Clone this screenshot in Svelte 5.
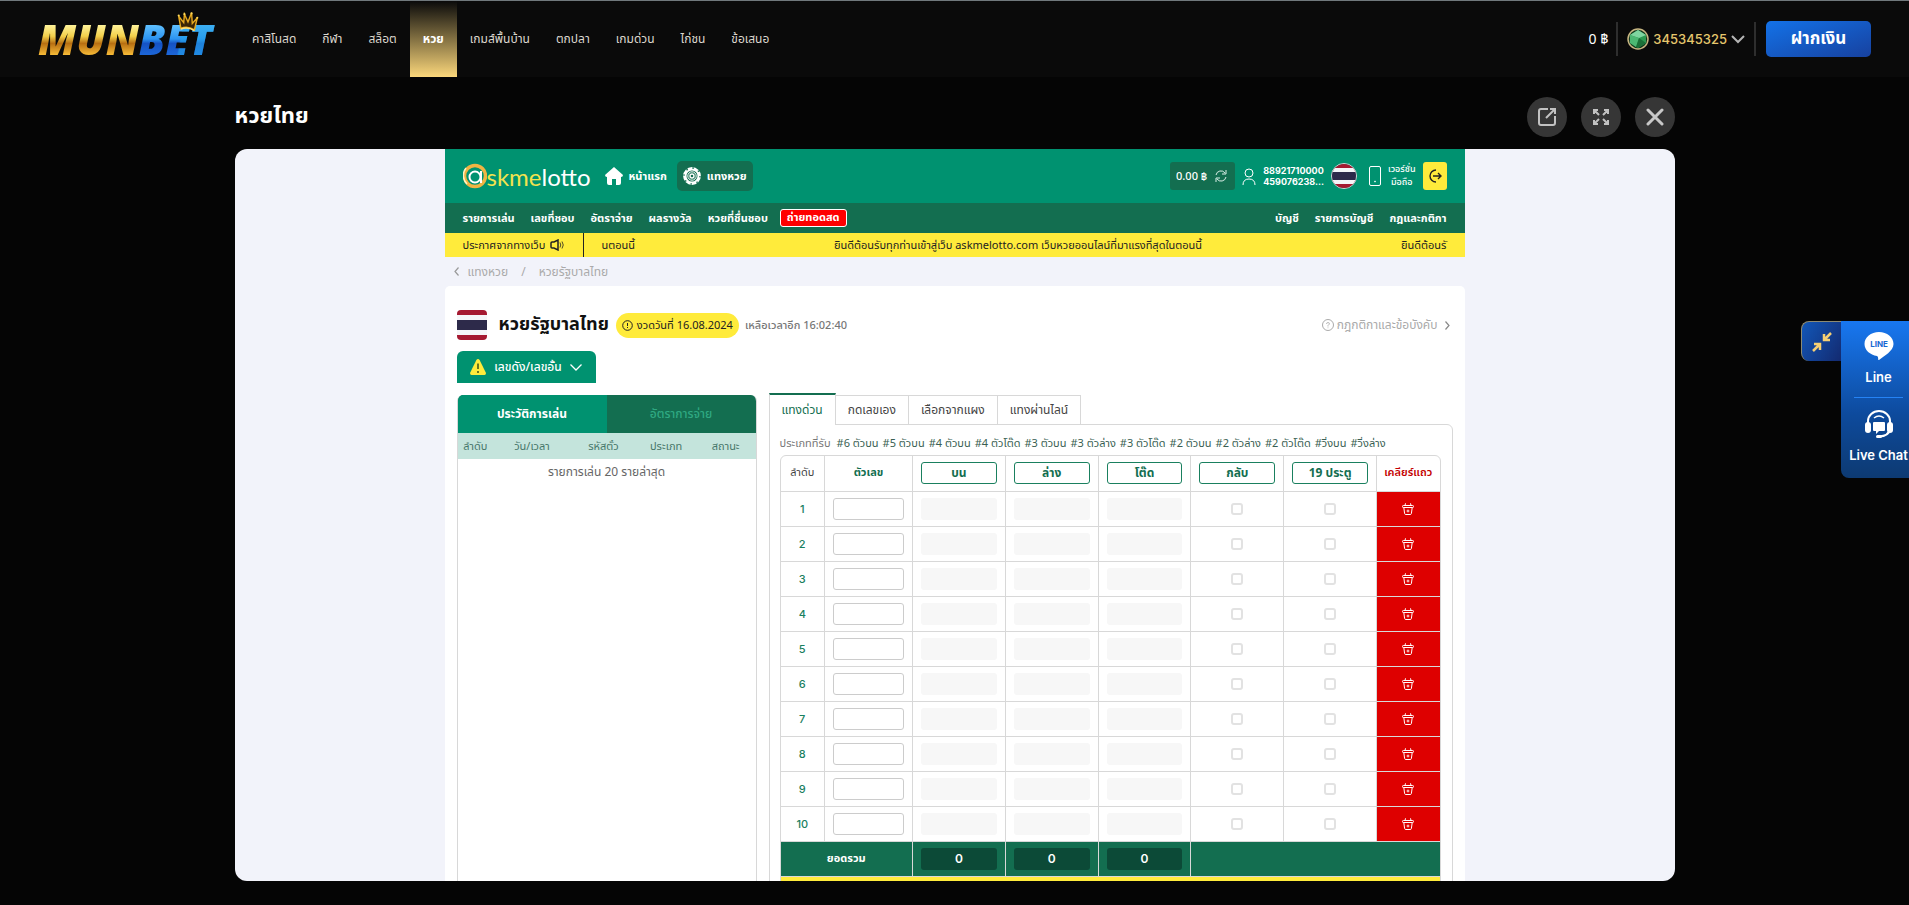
<script>
  let activeNav = $state('หวย');
  let activeTab = $state('แทงด่วน');
  let activeHistory = $state('ประวัติการเล่น');

  const navItems = ['คาสิโนสด', 'กีฬา', 'สล็อต', 'หวย', 'เกมส์พื้นบ้าน', 'ตกปลา', 'เกมด่วน', 'ไก่ชน', 'ข้อเสนอ'];
  const subLeft = ['รายการเล่น', 'เลขที่ชอบ', 'อัตราจ่าย', 'ผลรางวัล', 'หวยที่ชื่นชอบ'];
  const subRight = ['บัญชี', 'รายการบัญชี', 'กฎและกติกา'];
  const historyTabs = ['ประวัติการเล่น', 'อัตราการจ่าย'];
  const historyColumns = ['ลำดับ', 'วัน/เวลา', 'รหัสตั๋ว', 'ประเภท', 'สถานะ'];
  const tabs = ['แทงด่วน', 'กดเลขเอง', 'เลือกจากแผง', 'แทงผ่านไลน์'];
  const types = [
    '#6 ตัวบน', '#5 ตัวบน', '#4 ตัวบน', '#4 ตัวโต๊ด', '#3 ตัวบน', '#3 ตัวล่าง',
    '#3 ตัวโต๊ด', '#2 ตัวบน', '#2 ตัวล่าง', '#2 ตัวโต๊ด', '#วิ่งบน', '#วิ่งล่าง'
  ];
  const betColumns = ['บน', 'ล่าง', 'โต๊ด'];
  const flagColumns = ['กลับ', '19 ประตู'];
  let rows = $state(Array.from({ length: 10 }, () => ({ number: '', checks: [false, false] })));

  function clearRow(row) {
    row.number = '';
    row.checks = [false, false];
  }
</script>

{#snippet flag()}
  <svg viewBox="0 0 30 30" preserveAspectRatio="none" aria-hidden="true">
    <rect width="30" height="30" fill="#a51931" />
    <rect y="5" width="30" height="20" fill="#f4f5f8" />
    <rect y="10" width="30" height="10" fill="#2d2a4a" />
  </svg>
{/snippet}

<header class="site-header">
  <a class="logo" href="/" aria-label="MUNBET">
    <span class="gold">MUN</span><span class="blue">BET</span>
    <svg class="crown" viewBox="0 0 30 28" aria-hidden="true">
      <path d="M5 23 L2 6 L9 15 L10 3 L15 14 L20 1 L21 16 L28 8 L24 25 Q14 19 5 23Z" fill="#3a2505" stroke="#e5a91f" stroke-width="2" />
      <path d="M5 24 Q14 20 24 26" fill="none" stroke="#ffe07a" stroke-width="2" />
      <circle cx="2" cy="5" r="1.5" fill="#ffd95a" /><circle cx="10" cy="3" r="1.5" fill="#ffd95a" />
      <circle cx="20" cy="2" r="1.5" fill="#ffd95a" /><circle cx="28" cy="8" r="1.5" fill="#ffd95a" />
    </svg>
  </a>
  <nav class="main-nav">
    {#each navItems as item}
      <a href="#{item}" class:active={item === activeNav} onclick={() => (activeNav = item)}>{item}</a>
    {/each}
  </nav>
  <div class="account">
    <span class="money">0 ฿</span>
    <button class="user">
      <svg width="22" height="22" viewBox="0 0 22 22" aria-hidden="true">
        <circle cx="11" cy="11" r="10" fill="#12381f" stroke="#c7b682" stroke-width="1.5" />
        <path d="M11 2 L19 7 V15 L11 20 L3 15 V7Z" fill="#2c9a51" />
        <path d="M11 2 L19 7 L12 10 L3 7Z" fill="#7fd6a0" />
        <path d="M3 7 L12 10 L9 19 L3 15Z" fill="#4cb873" />
        <path d="M12 10 L19 15 L11 20 L9 19Z" fill="#1b7038" />
      </svg>
      <span>345345325</span>
      <svg width="14" height="9" viewBox="0 0 14 9" aria-hidden="true">
        <path d="M1 1 L7 7 L13 1" fill="none" stroke="#b5b5b5" stroke-width="2" />
      </svg>
    </button>
    <button class="deposit">ฝากเงิน</button>
  </div>
</header>

<main>
  <div class="title-bar">
    <h1>หวยไทย</h1>
    <div class="window-buttons">
      <button aria-label="เปิดหน้าต่างใหม่">
        <svg width="20" height="20" viewBox="0 0 20 20" fill="none" stroke="#c2c2c2" stroke-width="2">
          <path d="M11 2 H4 Q2 2 2 4 V16 Q2 18 4 18 H16 Q18 18 18 16 V9" />
          <path d="M9 11 L17 3 M13 2 H18 V7" />
        </svg>
      </button>
      <button aria-label="เต็มจอ">
        <svg width="18" height="18" viewBox="0 0 18 18" fill="none" stroke="#c2c2c2" stroke-width="2">
          <path d="M2 6 V2 H6 M2 2 L7 7 M12 2 H16 V6 M16 2 L11 7 M2 12 V16 H6 M2 16 L7 11 M12 16 H16 V12 M16 16 L11 11" />
        </svg>
      </button>
      <button aria-label="ปิด">
        <svg width="18" height="18" viewBox="0 0 18 18" fill="none" stroke="#c8c8c8" stroke-width="3" stroke-linecap="round">
          <path d="M2 2 L16 16 M16 2 L2 16" />
        </svg>
      </button>
    </div>
  </div>

  <section class="frame">
    <div class="lotto">
      <div class="lotto-header">
        <a class="lotto-logo" href="#home">
          <svg width="24" height="26" viewBox="0 0 24 26" fill="none" aria-hidden="true">
            <circle cx="12" cy="13" r="10.5" stroke="#f0b443" stroke-width="3.5" />
            <path d="M3 5 A12 12 0 0 0 4 21" stroke="#fff3c4" stroke-width="1.5" />
            <circle cx="12" cy="14" r="5.5" fill="#009270" stroke="#fff" stroke-width="2" />
            <path d="M18 8 V20" stroke="#fff" stroke-width="2" />
          </svg>
          <span class="skme">skme</span><span>lotto</span>
        </a>
        <a class="header-link" href="#home">
          <svg width="18" height="18" viewBox="0 0 18 18" aria-hidden="true">
            <path d="M9 0 L18 8 Q18 10 16 10 V16 Q16 18 14 18 H11 V12 H7 V18 H4 Q2 18 2 16 V10 Q0 10 0 8Z" fill="#fff" />
          </svg>
          หน้าแรก
        </a>
        <a class="header-link selected" href="#bet">
          <svg width="18" height="18" viewBox="0 0 18 18" fill="none" stroke="#fff" aria-hidden="true">
            <circle cx="9" cy="9" r="7.2" stroke-width="3.4" />
            <circle cx="9" cy="9" r="8" stroke="#136e50" stroke-width="1.4" stroke-dasharray="1.5 4.8" />
            <circle cx="9" cy="9" r="4.2" stroke-width="1" />
            <circle cx="9" cy="9" r="2" stroke-width="1.4" />
          </svg>
          แทงหวย
        </a>
        <div class="header-right">
          <button class="balance">
            0.00 ฿
            <svg width="12" height="12" viewBox="0 0 12 12" fill="none" stroke="#dcefe8" aria-hidden="true">
              <path d="M1 5 A5 5 0 0 1 10 3 M11 0 V4 H7 M11 7 A5 5 0 0 1 2 9 M1 12 V8 H5" />
            </svg>
          </button>
          <svg width="14" height="17" viewBox="0 0 14 17" fill="none" stroke="#fff" aria-hidden="true">
            <circle cx="7" cy="5" r="4" />
            <path d="M1 17 Q1 11 7 11 Q13 11 13 17" />
          </svg>
          <span class="user-code">88921710000<br />459076238...</span>
          <span class="round-flag">{@render flag()}</span>
          <svg class="phone" width="12" height="20" viewBox="0 0 12 20" fill="none" stroke="#fff" aria-hidden="true">
            <rect x="0.5" y="0.5" width="11" height="19" rx="1.5" />
            <circle cx="6" cy="15.5" r="0.5" />
          </svg>
          <a class="mobile" href="#mobile">เวอร์ชั่น<br />มือถือ</a>
          <button class="logout" aria-label="ออกจากระบบ">
            <svg width="14" height="14" viewBox="0 0 14 14" fill="none" stroke="#222" stroke-width="1.4">
              <path d="M8 1 A6 6 0 1 0 8 13 M5 7 H13 M10 4 L13 7 L10 10" />
            </svg>
          </button>
        </div>
      </div>

      <nav class="sub-nav">
        {#each subLeft as item}<a href="#{item}">{item}</a>{/each}
        <a class="live" href="#live">ถ่ายทอดสด</a>
        <div class="sub-right">
          {#each subRight as item}<a href="#{item}">{item}</a>{/each}
        </div>
      </nav>

      <div class="notice">
        <div class="notice-label">
          ประกาศจากทางเว็บ
          <svg width="14" height="12" viewBox="0 0 14 12" fill="none" stroke="#222" aria-hidden="true">
            <path d="M1 4 Q1 3 2 3 H4 L8 1 V11 L4 9 H2 Q1 9 1 8Z" stroke-width="1.5" />
            <path d="M10 3.5 Q11.500 6 10 8.500 M12 2.500 Q14.500 6 12 9.500" stroke-width="0.8" />
          </svg>
        </div>
        <div class="ticker">
          <span>นตอนนี้</span>
          <span>ยินดีต้อนรับทุกท่านเข้าสู่เว็บ askmelotto.com เว็บหวยออนไลน์ที่มาแรงที่สุดในตอนนี้</span>
          <span>ยินดีต้อนรั</span>
        </div>
      </div>

      <nav class="crumbs">
        <svg width="5" height="9" viewBox="0 0 5 9" aria-hidden="true"><path d="M4.5 0.5 L1 4.5 L4.5 8.5" fill="none" stroke="#999" stroke-width="1.2" /></svg>
        <a href="#bet">แทงหวย</a><span>/</span><a href="#thai">หวยรัฐบาลไทย</a>
      </nav>

      <div class="card">
        <div class="draw">
          <span class="square-flag">{@render flag()}</span>
          <h2>หวยรัฐบาลไทย</h2>
          <span class="date">
            <svg width="11" height="11" viewBox="0 0 11 11" fill="none" stroke="#222" aria-hidden="true">
              <circle cx="5.5" cy="5.5" r="4.8" /><path d="M5.5 3 V6 M5.5 7 V8" />
            </svg>
            งวดวันที่ 16.08.2024
          </span>
          <span class="remaining">เหลือเวลาอีก 16:02:40</span>
          <a class="rules" href="#rules">
            <svg width="12" height="12" viewBox="0 0 12 12" fill="none" stroke="#aaa" aria-hidden="true">
              <circle cx="6" cy="6" r="5.5" /><path d="M4.5 5 Q4.5 3.5 6 3.5 Q7.5 3.5 7.5 5 L6 6.5 V7.5 M6 8.5 V9.2" stroke-width="0.8" />
            </svg>
            กฎกติกาและข้อบังคับ
            <svg class="more" width="5" height="9" viewBox="0 0 5 9" aria-hidden="true"><path d="M0.5 0.5 L4 4.5 L0.5 8.5" fill="none" stroke="#888" stroke-width="1.2" /></svg>
          </a>
        </div>

        <button class="hot-numbers">
          <svg width="16" height="16" viewBox="0 0 16 16" aria-hidden="true">
            <path d="M8 0 Q9 0 9.600 1 L16 14 Q16 16 14.500 16 H1.500 Q0 16 0 14 L6.400 1 Q7 0 8 0Z" fill="#ffeb3b" />
            <path d="M8 4.500 V10 M8 12 V14" stroke="#5b6a1c" stroke-width="1.800" />
          </svg>
          เลขดัง/เลขอั้น
          <svg width="12" height="7" viewBox="0 0 12 7" aria-hidden="true"><path d="M0.500 0.500 L6 6 L11.500 0.500" fill="none" stroke="#fff" stroke-width="1.300" /></svg>
        </button>

        <div class="columns">
          <section class="history">
            <div class="history-tabs">
              {#each historyTabs as tab}
                <button class:active={tab === activeHistory} onclick={() => (activeHistory = tab)}>{tab}</button>
              {/each}
            </div>
            <table>
              <thead>
                <tr>{#each historyColumns as column}<th>{column}</th>{/each}</tr>
              </thead>
              <tbody>
                <tr><td colspan="5">รายการเล่น 20 รายล่าสุด</td></tr>
              </tbody>
            </table>
          </section>

          <section class="betting">
            <div class="bet-tabs">
              {#each tabs as tab}
                <button class:active={tab === activeTab} onclick={() => (activeTab = tab)}>{tab}</button>
              {/each}
            </div>
            <div class="bet-panel">
              <div class="types">
                <span class="types-label">ประเภทที่รับ</span>
                {#each types as type}<span>{type}</span>{/each}
              </div>
              <div class="table-wrap">
                <table class="bet-table">
                  <colgroup>
                    <col class="col-no" /><col class="col-number" />
                    <col /><col /><col /><col /><col />
                    <col class="col-clear" />
                  </colgroup>
                  <thead>
                    <tr>
                      <th class="plain">ลำดับ</th>
                      <th>ตัวเลข</th>
                      {#each [...betColumns, ...flagColumns] as column}
                        <th><button class="fill">{column}</button></th>
                      {/each}
                      <th class="clear-title">เคลียร์แถว</th>
                    </tr>
                  </thead>
                  <tbody>
                    {#each rows as row, i}
                      <tr>
                        <td class="no">{i + 1}</td>
                        <td><input type="text" aria-label="ตัวเลข {i + 1}" bind:value={row.number} /></td>
                        {#each betColumns as column}
                          <td><input type="text" aria-label="{column} {i + 1}" disabled /></td>
                        {/each}
                        {#each flagColumns as column, c}
                          <td><input type="checkbox" aria-label="{column} {i + 1}" bind:checked={row.checks[c]} /></td>
                        {/each}
                        <td class="clear">
                          <button aria-label="เคลียร์แถว {i + 1}" onclick={() => clearRow(row)}>
                            <svg width="12" height="12" viewBox="0 0 12 12" fill="none" stroke="#fff">
                              <rect x="0.500" y="2.500" width="11" height="2" rx="0.800" />
                              <path d="M1.800 4.500 L2.600 10.500 Q2.800 11.500 3.800 11.500 H8.200 Q9.200 11.500 9.400 10.500 L10.200 4.500 M3.500 0.300 L3 2.500 M8.500 0.300 L9 2.500" />
                              <path d="M6 6.600 V9.400 M4.600 8 H7.400" stroke-width="0.900" />
                            </svg>
                          </button>
                        </td>
                      </tr>
                    {/each}
                  </tbody>
                  <tfoot>
                    <tr>
                      <td colspan="2">ยอดรวม</td>
                      {#each betColumns as _}<td><output>0</output></td>{/each}
                      <td colspan="3"></td>
                    </tr>
                    <tr class="grand"><td colspan="8"></td></tr>
                  </tfoot>
                </table>
              </div>
            </div>
          </section>
        </div>
      </div>
    </div>
  </section>
</main>

<aside class="contact">
  <button class="collapse" aria-label="ย่อ">
    <svg width="20" height="20" viewBox="0 0 20 20" fill="none" stroke="#f6cf73" stroke-width="2.500">
      <path d="M19 1 L12 8 M12 2 V8 H18 M1 19 L8 12 M2 12 H8 V18" />
    </svg>
  </button>
  <div class="contact-panel">
    <a href="#line">
      <svg width="30" height="30" viewBox="0 0 30 30" aria-hidden="true">
        <path d="M15 1 C23 1 29.500 6 29.500 13 C29.500 20 20 25 15 29 C13.500 29.500 15 26 13 25 C6 24 0.500 19 0.500 13 C0.500 6 7 1 15 1Z" fill="#fff" />
        <text x="15" y="16" text-anchor="middle" font-size="8" font-weight="700" fill="#1769d2">LINE</text>
      </svg>
      Line
    </a>
    <hr />
    <a href="#chat">
      <svg width="30" height="30" viewBox="0 0 30 30" fill="none" aria-hidden="true">
        <path d="M4 14 V12 A11 10 0 0 1 26 12 V20 Q25 27 15 27.500" stroke="#fff" stroke-width="2" />
        <rect x="1" y="13" width="6" height="11" rx="3" fill="#fff" />
        <rect x="23" y="13" width="6" height="11" rx="3" fill="#fff" />
        <rect x="12" y="26" width="6" height="3" rx="1.500" fill="#fff" />
        <path d="M10 13 H20 Q21 13 21 14 V21 Q21 22 20 22 H15 L12 25 V22 H10 Q9 22 9 21 V14 Q9 13 10 13Z" fill="#fff" />
        <path d="M10 9 Q15 5 20 9" stroke="#fff" stroke-width="1.500" />
      </svg>
      Live Chat
    </a>
  </div>
</aside>

<style>
  :global(body) {
    background: #050505;
    overflow: hidden;
    font-family: "Noto Sans Thai", "Noto Sans", "Liberation Sans", sans-serif;
  }

  a {
    color: inherit;
    text-decoration: none;
  }

  button {
    padding: 0;
    border: 0;
    background: none;
    color: inherit;
    font: inherit;
    cursor: pointer;
  }

  svg {
    flex: none;
  }

  .site-header {
    display: flex;
    align-items: center;
    height: 77px;
    box-sizing: border-box;
    padding: 0 38px;
    border-top: 1px solid #70787c;
    background: #0a0a0a;
  }

  .logo {
    position: relative;
    display: flex;
    width: 182px;
    margin-right: 19px;
    font: italic 900 42px/56px "Open Sans", sans-serif;
  }

  .gold,
  .blue {
    color: transparent;
    background-clip: text;
  }

  .gold {
    background-image: linear-gradient(#fff39a 25%, #f3d04a 45%, #b86f12 58%, #f5b936 78%);
  }

  .blue {
    padding-right: 8px;
    background-image: linear-gradient(100deg, transparent 50%, #25a3ea99 52%), linear-gradient(#5fc0ff 25%, #2b93f0 50%, #1552c4 58%, #1c66d8 78%);
  }

  .crown {
    position: absolute;
    left: 136px;
    top: 1px;
    width: 28px;
    height: 20px;
  }

  .main-nav {
    display: flex;
    height: 100%;
  }

  .main-nav a {
    display: flex;
    align-items: center;
    padding: 0 13px;
    color: #ddd8cf;
    font-size: 12px;
  }

  .main-nav a.active {
    background: linear-gradient(#0a0a0a, #fbd77b);
    color: #fff;
    font-weight: 700;
  }

  .account {
    display: flex;
    align-items: center;
    margin-left: auto;
    font-size: 14px;
    color: #fff;
  }

  .user {
    display: flex;
    align-items: center;
    gap: 4px;
    height: 34px;
    margin: 0 10px 0 8px;
    padding: 0 9px;
    border: solid #2e2e2e;
    border-width: 0 2px;
    color: #e5c76d;
    font: 500 13px Inter, sans-serif;
  }

  .deposit {
    width: 105px;
    height: 36px;
    border-radius: 5px;
    background: linear-gradient(160deg, #1372e8, #17419f);
    font-size: 17px;
    font-weight: 700;
  }

  main {
    max-width: 1440px;
    margin: 0 auto;
  }

  .title-bar {
    display: flex;
    align-items: center;
    justify-content: space-between;
    padding: 20px 0 12px;
    color: #fff;
  }

  h1 {
    margin: 0;
    font-size: 22px;
    line-height: 28px;
  }

  .window-buttons {
    display: flex;
    gap: 14px;
  }

  .window-buttons button {
    display: grid;
    place-items: center;
    width: 40px;
    height: 40px;
    border-radius: 50%;
    background: #363636;
  }

  .frame {
    height: calc(100vh - 173px);
    overflow: hidden;
    border-radius: 12px;
    background: #f2f3fa;
  }

  .lotto {
    max-width: 1020px;
    margin: 0 auto;
    font-size: 12px;
    color: #444;
  }

  .lotto-header {
    display: flex;
    align-items: center;
    height: 54px;
    padding: 0 18px;
    background: #009270;
    color: #fff;
  }

  .lotto-logo {
    display: flex;
    align-items: center;
    margin-right: 14px;
    font: 24px Lato, sans-serif;
  }

  .skme {
    color: #f2e24f;
  }

  .header-link {
    display: flex;
    align-items: center;
    gap: 6px;
    height: 30px;
    font-size: 11px;
    font-weight: 700;
  }

  .selected {
    margin-left: 10px;
    padding: 0 6px;
    border-radius: 5px;
    background: #136e50;
  }

  .header-right {
    display: flex;
    align-items: center;
    gap: 7px;
    margin-left: auto;
  }

  .balance {
    display: flex;
    align-items: center;
    gap: 8px;
    height: 28px;
    padding: 0 8px 0 6px;
    border-radius: 3px;
    background: #136e50;
    font-size: 11px;
    font-weight: 500;
  }

  .user-code {
    font: 700 9px/11px Inter, sans-serif;
  }

  .round-flag {
    width: 24px;
    height: 24px;
    overflow: hidden;
    border: 1px solid #d9d4d8;
    border-radius: 50%;
  }

  .round-flag svg,
  .square-flag svg {
    display: block;
    width: 100%;
    height: 100%;
  }

  .phone {
    margin-left: 5px;
  }

  .mobile {
    text-align: center;
    font-size: 9px;
    font-weight: 500;
    line-height: 13px;
  }

  .logout {
    display: grid;
    place-items: center;
    width: 24px;
    height: 28px;
    border-radius: 3px;
    background: #ffeb3b;
  }

  .sub-nav {
    display: flex;
    align-items: center;
    gap: 16px;
    height: 30px;
    padding: 0 18px;
    background: #136e50;
    color: #fff;
    font-size: 11px;
    font-weight: 700;
  }

  .live {
    box-sizing: border-box;
    height: 18px;
    margin-left: -4px;
    padding: 0 6px;
    border: 1px solid #fff;
    border-radius: 3px;
    background: #f00;
    line-height: 16px;
  }

  .sub-right {
    display: flex;
    gap: 16px;
    margin-left: auto;
  }

  .notice {
    display: flex;
    align-items: center;
    height: 24px;
    padding: 0 18px;
    background: #ffeb3b;
    color: #222;
    font-size: 11px;
  }

  .notice-label {
    display: flex;
    align-items: center;
    gap: 5px;
    width: 120px;
    height: 24px;
    border-right: 1px solid #222;
    white-space: nowrap;
  }

  .ticker {
    display: flex;
    flex: 1;
    justify-content: space-between;
    margin-left: 18px;
    white-space: nowrap;
  }

  .crumbs {
    display: flex;
    align-items: center;
    gap: 13px;
    height: 29px;
    padding-left: 9px;
    color: #aaa;
  }

  .crumbs svg {
    margin-right: -4px;
  }

  .card {
    padding: 24px 12px 0;
    border-radius: 5px 5px 0 0;
    background: #fff;
  }

  .draw {
    display: flex;
    align-items: center;
    height: 30px;
  }

  .square-flag {
    width: 30px;
    height: 30px;
    overflow: hidden;
    border-radius: 4px;
  }

  h2 {
    margin: 0 7px 0 12px;
    color: #111;
    font-size: 18px;
    line-height: 30px;
  }

  .date {
    display: flex;
    align-items: center;
    gap: 4px;
    height: 25px;
    padding: 0 6px;
    border-radius: 13px;
    background: #ffeb3b;
    color: #222;
    font-size: 11px;
  }

  .remaining {
    margin-left: 6px;
    color: #777;
    font-size: 11px;
    font-weight: 500;
  }

  .rules {
    display: flex;
    align-items: center;
    gap: 3px;
    margin-left: auto;
    padding-right: 3px;
    color: #aaa;
  }

  .more {
    margin-left: 4px;
  }

  .hot-numbers {
    display: flex;
    align-items: center;
    justify-content: center;
    gap: 8px;
    width: 139px;
    height: 32px;
    margin: 11px 0 12px;
    border-radius: 6px 6px 0 0;
    background: #009270;
    color: #fff;
    font-weight: 500;
  }

  .columns {
    display: flex;
    align-items: stretch;
    gap: 12px;
  }

  .history {
    width: 300px;
    box-sizing: border-box;
    border: 1px solid #d8d8d8;
    border-top: 0;
    border-radius: 6px 6px 0 0;
    overflow: hidden;
  }

  .history-tabs {
    display: flex;
    background: #136e50;
  }

  .history-tabs button {
    flex: 1;
    height: 38px;
    color: #2fa982;
    font-weight: 500;
  }

  .history-tabs button.active {
    background: #009270;
    color: #fff;
    font-weight: 700;
  }

  .history table {
    width: 100%;
    border-collapse: collapse;
    table-layout: fixed;
    text-align: center;
    font-size: 11px;
  }

  .history th {
    width: 20%;
    height: 26px;
    padding: 0;
    background: #c4e4dc;
    color: #47776a;
    font-weight: 400;
  }

  .history th:first-child {
    width: 12%;
  }

  .history th:nth-child(2) {
    width: 26%;
  }

  .history th:nth-child(3) {
    width: 22%;
  }

  .history td {
    height: 26px;
    padding: 0;
    color: #666;
    font-size: 12px;
  }

  .betting {
    flex: 1;
    min-width: 0;
  }

  .bet-tabs {
    display: flex;
    height: 30px;
    margin-bottom: -1px;
  }

  .bet-tabs button {
    box-sizing: border-box;
    padding: 0 12px;
    border: 1px solid #d8d8d8;
    border-left: 0;
    background: #fff;
    font-size: 12px;
  }

  .bet-tabs button.active {
    position: relative;
    height: 32px;
    margin-top: -2px;
    border-top: 2px solid #136e50;
    border-bottom: 0;
    border-left: 1px solid #d8d8d8;
    color: #136e50;
  }

  .bet-panel {
    padding: 8px 11px 8px 10px;
    border: 1px solid #d8d8d8;
    border-radius: 0 6px 0 0;
  }

  .types {
    display: flex;
    gap: 4px;
    height: 22px;
    color: #3a5f53;
    font-size: 11px;
    line-height: 22px;
    white-space: nowrap;
  }

  .types-label {
    margin-right: 2px;
    color: #777;
  }

  .table-wrap {
    border: 1px solid #d8d8d8;
    border-radius: 6px 6px 0 0;
    overflow: hidden;
  }

  .bet-table {
    width: 100%;
    border-collapse: collapse;
    table-layout: fixed;
    text-align: center;
  }

  .col-no {
    width: 44px;
  }

  .col-number {
    width: 88px;
  }

  .col-clear {
    width: 63px;
  }

  .bet-table th,
  .bet-table td {
    box-sizing: border-box;
    height: 35px;
    padding: 0 8px;
    border: solid #d8d8d8;
    border-width: 0 0 1px 1px;
    font-size: 11px;
    line-height: 20px;
  }

  .bet-table th:first-child,
  .bet-table td:first-child {
    border-left: 0;
  }

  .bet-table th {
    color: #136e50;
  }

  .bet-table .plain {
    padding: 0;
    color: #444;
    font-weight: 400;
  }

  .bet-table .clear-title {
    padding: 0;
    color: #c40000;
    font-weight: 600;
  }

  .fill {
    display: block;
    width: 100%;
    height: 22px;
    border: 1px solid #1a805f;
    border-radius: 3px;
    color: #136e50;
    font-size: 12px;
    line-height: 20px;
  }

  .bet-table .no {
    color: #1a805f;
    font: 500 11px Inter, sans-serif;
  }

  input[type="text"] {
    display: block;
    box-sizing: border-box;
    width: 100%;
    height: 22px;
    margin: 0;
    border: 1px solid #ccc;
    border-radius: 3px;
    background: #fff;
  }

  input[type="text"]:disabled {
    border: 0;
    background: #f7f7f7;
  }

  input[type="checkbox"] {
    appearance: none;
    display: block;
    box-sizing: border-box;
    width: 12px;
    height: 12px;
    margin: 0 auto;
    border: 2px solid #e2e2e2;
    border-radius: 3px;
    background: #fff;
  }

  input[type="checkbox"]:checked {
    background: #136e50;
  }

  .bet-table .clear {
    padding: 0;
    background: #de0000;
  }

  .clear button {
    display: grid;
    place-items: center;
    width: 100%;
    height: 34px;
  }

  tfoot td {
    background: #136e50;
    color: #fff;
    font-weight: 700;
  }

  output {
    display: block;
    height: 22px;
    border-radius: 3px;
    background: #0c4a37;
    font: 600 12px/22px Inter, sans-serif;
  }

  .grand td {
    background: #ffeb3b;
  }

  .contact {
    position: fixed;
    top: 321px;
    right: -7px;
    display: flex;
    align-items: flex-start;
    color: #fff;
    font: 600 13px Inter, sans-serif;
  }

  .collapse {
    display: grid;
    place-items: center;
    width: 40px;
    height: 40px;
    box-sizing: border-box;
    border: solid #8c8a72;
    border-width: 1px 0 0 1px;
    border-radius: 8px 0 0 8px;
    background: linear-gradient(120deg, #1257b8, #132a70);
  }

  .contact-panel {
    width: 75px;
    height: 157px;
    box-sizing: border-box;
    padding-top: 10px;
    border-radius: 0 0 0 8px;
    background: linear-gradient(#1877f0, #0d4a9c 60%, #0d3a72);
  }

  .contact-panel a {
    display: flex;
    flex-direction: column;
    align-items: center;
    gap: 7px;
    line-height: 18px;
    white-space: nowrap;
  }

  hr {
    width: 49px;
    margin: 11px auto;
    border: 0;
    border-top: 1px solid #2583f5;
  }
</style>
